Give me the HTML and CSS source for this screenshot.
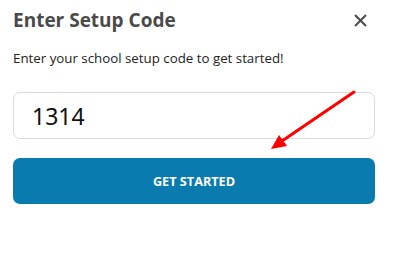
FILE: index.html
```html
<!DOCTYPE html>
<html>
<head>
<meta charset="utf-8">
<link rel="stylesheet" href="styles.css">
</head>
<body>
<div class="dialog">
  <div class="header">
    <h1 class="title">Enter Setup Code</h1>
    <button class="close" aria-label="Close">
      <svg width="13" height="13" viewBox="0 0 13 13"><path d="M1 1L12 12M12 1L1 12" stroke="#4a4a4a" stroke-width="2" fill="none"/></svg>
    </button>
  </div>
  <p class="subtitle">Enter your school setup code to get started!</p>
  <div class="field">1314</div>
  <button class="primary">GET STARTED</button>
  <svg class="arrow" width="393" height="258" viewBox="0 0 393 258">
    <line x1="354" y1="92" x2="282" y2="141" stroke="#ff0000" stroke-width="3" stroke-linecap="round"/>
    <polygon points="271,149 279,135 287,146" fill="#ff0000"/>
  </svg>
</div>
</body>
</html>
```
FILE: styles.css
```css
html, body {
  margin: 0;
  padding: 0;
  background: #fff;
}
body {
  font-family: "Open Sans", "Noto Sans", sans-serif;
  width: 393px;
  height: 258px;
  overflow: hidden;
}
.dialog {
  position: relative;
  padding: 0 18px 0 13px;
  height: 258px;
  box-sizing: border-box;
}
.header {
  display: flex;
  justify-content: space-between;
  align-items: center;
  height: 40px;
  padding-right: 8px;
}
.title {
  margin: 0;
  font-size: 19px;
  font-weight: 700;
  color: #4a4a4a;
  letter-spacing: 0;
}
.close {
  border: 0;
  background: none;
  padding: 0;
  width: 13px;
  height: 13px;
  display: flex;
}
.subtitle {
  margin: 8px 0 0;
  font-size: 13.3px;
  color: #222;
  line-height: 20px;
}
.field {
  margin-top: 24px;
  height: 47px;
  box-sizing: border-box;
  border: 1px solid #dcdcdc;
  border-radius: 7px;
  padding-left: 18px;
  display: flex;
  align-items: center;
  font-family: "Noto Sans", "Open Sans", sans-serif;
  font-size: 23px;
  color: #111;
}
.primary {
  display: block;
  width: 100%;
  margin-top: 19px;
  height: 46px;
  border: 0;
  border-radius: 7px;
  background: #0a7bae;
  color: #fff;
  font-family: "Open Sans", sans-serif;
  font-weight: 700;
  font-size: 12.7px;
}
.arrow {
  position: absolute;
  left: 0;
  top: 0;
  pointer-events: none;
}
```
